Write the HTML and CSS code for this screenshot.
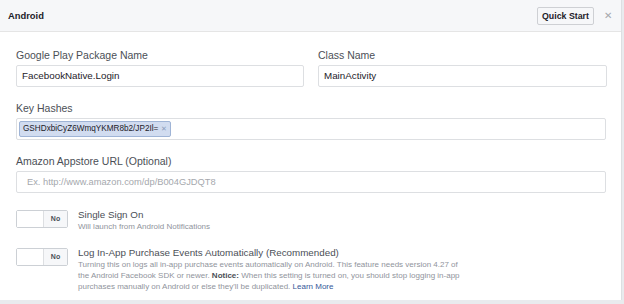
FILE: index.html
```html
<!DOCTYPE html>
<html lang="en">
<head>
  <meta charset="UTF-8" />
  <title>Android</title>
  <link rel="stylesheet" href="styles.css">
</head>
<body>
  <div class="panel">
    <div class="panel-header">
      <span class="title">Android</span>
      <button class="quick-start">Quick Start</button>
      <span class="close">&#x2715;</span>
    </div>

    <div class="panel-body">
      <div class="row two">
        <div class="field">
          <label>Google Play Package Name</label>
          <div class="input">FacebookNative.Login</div>
        </div>
        <div class="field">
          <label>Class Name</label>
          <div class="input">MainActivity</div>
        </div>
      </div>

      <div class="field">
        <label>Key Hashes</label>
        <div class="input tags">
          <span class="tag">GSHDxbiCyZ6WmqYKMR8b2/JP2Il= <span class="tag-x">&#x2715;</span></span>
        </div>
      </div>

      <div class="field">
        <label>Amazon Appstore URL (Optional)</label>
        <div class="input placeholder">Ex. http://www.amazon.com/dp/B004GJDQT8</div>
      </div>

      <div class="setting first">
        <div class="toggle"><span class="off"></span><span class="no">No</span></div>
        <div class="setting-text">
          <div class="setting-title">Single Sign On</div>
          <div class="setting-desc">Will launch from Android Notifications</div>
        </div>
      </div>

      <div class="setting">
        <div class="toggle"><span class="off"></span><span class="no">No</span></div>
        <div class="setting-text">
          <div class="setting-title">Log In-App Purchase Events Automatically (Recommended)</div>
          <div class="setting-desc">Turning this on logs all in-app purchase events automatically on Android. This feature needs version 4.27 of the Android Facebook SDK or newer. <b>Notice:</b> When this setting is turned on, you should stop logging in-app purchases manually on Android or else they'll be duplicated. <a href="#">Learn More</a></div>
        </div>
      </div>
    </div>
  </div>
</body>
</html>
```

FILE: styles.css
```css
body {
    margin: 0;
    background-color: #e9ebee;
    font-family: "Liberation Sans", Arial, sans-serif;
    color: #4b4f56;
}

.panel {
    width: 621px;
    height: 300px;
    background-color: #fff;
    border-right: 1px solid #dddfe2;
}

.panel-header {
    height: 31px;
    background-color: #f6f7f9;
    border-bottom: 1px solid #e5e5e5;
    display: flex;
    align-items: center;
    padding: 0 9px 0 8px;
}

.title {
    font-size: 9.4px;
    font-weight: bold;
    color: #1d2129;
    flex: 1;
}

.quick-start {
    font-family: inherit;
    font-size: 8.8px;
    font-weight: bold;
    color: #1d2129;
    background-color: #f6f7f9;
    border: 1px solid #ced0d4;
    border-radius: 2px;
    width: 57px;
    height: 18px;
    padding: 0;
    margin-right: 10px;
}

.close {
    font-size: 10px;
    color: #a5a8ad;
}

.panel-body {
    padding: 17px 15px 0 16px;
}

.row.two {
    display: grid;
    grid-template-columns: 288px 289px;
    column-gap: 14px;
}

.field {
    margin-bottom: 15px;
}

label {
    display: block;
    font-size: 10.5px;
    line-height: 13px;
    margin-bottom: 3px;
    color: #4b4f56;
}

.input {
    height: 20px;
    border: 1px solid #dddfe2;
    border-radius: 2px;
    padding: 0 5px;
    font-size: 9.8px;
    line-height: 20px;
    color: #1d2129;
}

.input.placeholder {
    padding-left: 10px;
    font-size: 9.3px;
    color: #a5a8ad;
}

.tags {
    padding: 0 2px;
    display: flex;
    align-items: center;
}

.tag {
    display: inline-block;
    height: 14px;
    line-height: 14px;
    padding: 0 3px;
    background-color: #d1dcf0;
    border: 1px solid #9fb4d6;
    border-radius: 2px;
    font-size: 8.2px;
    color: #1d2129;
}

.tag-x {
    font-size: 7px;
    color: #8b9dbb;
}

.setting {
    display: flex;
    align-items: flex-start;
    margin-top: 14px;
}

.setting.first {
    margin-top: 3px;
}

.toggle {
    display: flex;
    width: 50px;
    height: 16px;
    border: 1px solid #ccd0d5;
    border-radius: 2px;
    margin-top: 2px;
}

.toggle .off {
    width: 26px;
    background-color: #fff;
    border-right: 1px solid #dddfe2;
}

.toggle .no {
    flex: 1;
    background-color: #f6f7f9;
    font-size: 7px;
    font-weight: bold;
    text-align: center;
    line-height: 16px;
    color: #4b4f56;
}

.setting-text {
    margin-left: 10px;
}

.setting-title {
    font-size: 9.8px;
    line-height: 13px;
    color: #4b4f56;
}

.setting-desc {
    font-size: 8px;
    line-height: 11px;
    color: #90949c;
    width: 386px;
}

.setting-desc b {
    color: #4b4f56;
}

.setting-desc a {
    color: #365899;
    text-decoration: none;
}
```
